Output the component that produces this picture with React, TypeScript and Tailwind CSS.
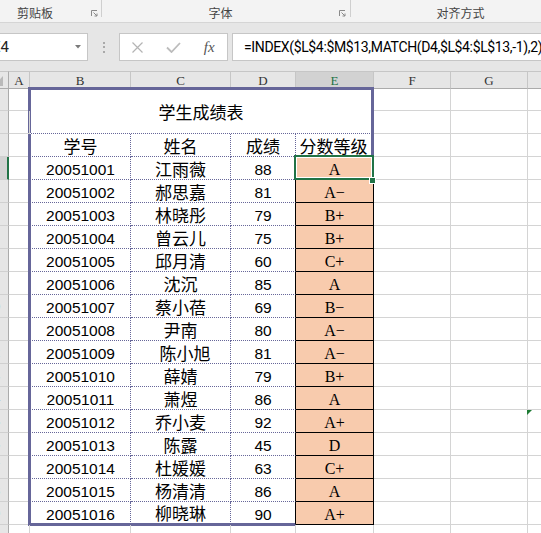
import React from 'react';

type Row = [string, string, number, string, string?];

const data: Row[] = [
  ['20051001', '江雨薇', 88, 'A'],
  ['20051002', '郝思嘉', 81, 'A−'],
  ['20051003', '林晓彤', 79, 'B+'],
  ['20051004', '曾云儿', 75, 'B+'],
  ['20051005', '邱月清', 60, 'C+'],
  ['20051006', '沈沉', 85, 'A'],
  ['20051007', '蔡小蓓', 69, 'B−'],
  ['20051008', '尹南', 80, 'A−'],
  ['20051009', '陈小旭', 81, 'A−', 'pl-[9px]'],
  ['20051010', '薛婧', 79, 'B+'],
  ['20051011', '萧煜', 86, 'A'],
  ['20051012', '乔小麦', 92, 'A+'],
  ['20051013', '陈露', 45, 'D'],
  ['20051014', '杜媛媛', 63, 'C+'],
  ['20051015', '杨清清', 86, 'A'],
  ['20051016', '柳晓琳', 90, 'A+'],
];

const GL = 'border-r border-b border-[#d4d4d4]';
const DOT = 'border-r border-b border-dotted border-[#666699]';
const CJK = "[font-family:'Noto_Sans_CJK_SC',sans-serif] text-[17px] leading-none text-black";
const NUM = "[font-family:'Liberation_Sans',sans-serif] text-[15.5px] leading-none text-black pt-[4px]";
const SERIF = "[font-family:'Liberation_Serif',serif] leading-none";

function RowHdr({ n, sel }: { n: number; sel?: boolean }) {
  return (
    <div
      className={`overflow-hidden flex items-center border-b border-b-[#d0d0d0] ${
        sel ? 'bg-[#d2d2d2] border-r-2 border-r-[#217346]' : 'bg-[#e6e6e6] border-r border-r-[#ababab]'
      }`}
    >
      <div className="shrink-0 w-[26px] -ml-[20px] text-center text-[13px] text-[#444] [font-family:'Liberation_Sans',sans-serif] leading-none">
        {n}
      </div>
    </div>
  );
}

function Launcher() {
  return (
    <svg width="7" height="7" viewBox="0 0 7 7" className="block">
      <path d="M0.5 6V0.5H6" fill="none" stroke="#8a8a8a" strokeWidth="1" />
      <path d="M2.5 2.5L6 6M6 3.5V6H3.5" fill="none" stroke="#8a8a8a" strokeWidth="1" />
    </svg>
  );
}

export default function App() {
  const cols = ['A', 'B', 'C', 'D', 'E', 'F', 'G', 'H'];
  return (
    <div className="w-[541px] h-[533px] overflow-hidden bg-white relative [font-family:'Liberation_Sans','Noto_Sans_CJK_SC',sans-serif]">
      {/* Ribbon group labels */}
      <div className="h-[23px] bg-[#f3f3f3] border-b border-[#d5d5d5] flex text-[12px] text-[#444] [font-family:'Noto_Sans_CJK_SC',sans-serif] overflow-hidden">
        <div className="w-[70px] shrink-0 h-[22px] flex items-center justify-center pt-[3px]">剪贴板</div>
        <div className="ml-[21px] mt-[10px] shrink-0">
          <Launcher />
        </div>
        <div className="ml-[3px] w-px h-[17px] bg-[#cfcfcf] shrink-0" />
        <div className="w-[237px] shrink-0 h-[22px] flex items-center justify-center pt-[3px]">字体</div>
        <div className="mt-[10px] shrink-0">
          <Launcher />
        </div>
        <div className="ml-[4px] w-px h-[17px] bg-[#cfcfcf] shrink-0" />
        <div className="w-[219px] shrink-0 h-[22px] flex items-center justify-center pt-[3px]">对齐方式</div>
      </div>

      {/* Formula bar band */}
      <div className="h-[48px] bg-[#e6e6e6] pt-[10px] overflow-hidden">
        <div className="flex items-center h-[28px]">
          <div className="-ml-[12px] w-[100px] h-[28px] shrink-0 bg-white border border-[#c6c6c6] flex items-center pl-[3px] text-[15px] text-[#222] [font-family:'Roboto',sans-serif]">
            <span>E4</span>
            <svg width="6" height="4" viewBox="0 0 6 4" className="ml-auto mr-[6px]">
              <path d="M0 0H6L3 3.5Z" fill="#7a7a7a" />
            </svg>
          </div>
          <div className="ml-[15px] w-[3px] flex flex-col gap-[2.5px] shrink-0">
            <div className="w-[2px] h-[2px] bg-[#a9a9a9]" />
            <div className="w-[2px] h-[2px] bg-[#a9a9a9]" />
            <div className="w-[2px] h-[2px] bg-[#a9a9a9]" />
          </div>
          <div className="ml-[13px] w-[109px] h-[28px] shrink-0 bg-white border border-[#c6c6c6] flex items-center">
            <div className="w-[36px] flex justify-center">
              <svg width="11" height="11" viewBox="0 0 11 11">
                <path d="M0.5 0.5L10.5 10.5M10.5 0.5L0.5 10.5" stroke="#b4b4b4" strokeWidth="1.2" />
              </svg>
            </div>
            <div className="w-[36px] flex justify-center">
              <svg width="15" height="11" viewBox="0 0 15 11">
                <path d="M1 5.5L5.5 10L14 1" fill="none" stroke="#bcbcbc" strokeWidth="1.8" />
              </svg>
            </div>
            <div className="w-[36px] flex justify-center text-[15px] italic text-[#555] [font-family:'Liberation_Serif',serif] leading-none">
              fx
            </div>
          </div>
          <div className="ml-[4px] w-[400px] h-[28px] shrink-0 bg-white border border-[#c6c6c6] flex items-center pl-[11px] text-[14px] tracking-[-0.36px] text-black [font-family:'Roboto',sans-serif] whitespace-nowrap">
            =INDEX($L$4:$M$13,MATCH(D4,$L$4:$L$13,-1),2)
          </div>
        </div>
      </div>

      {/* Sheet grid */}
      <div className="grid w-[605px] grid-cols-[9px_21px_101px_100px_65px_78px_77px_77px_77px] grid-rows-[18px_22px_repeat(19,23px)]">
        {/* column headers */}
        <div className="bg-[#e6e6e6] border-t border-b border-r border-t-[#c6c6c6] border-b-[#ababab] border-r-[#ababab] relative overflow-hidden">
          <svg width="9" height="17" viewBox="0 0 9 17" className="absolute left-0 top-0">
            <path d="M-6 14H3V4Z" fill="#b9b9b9" />
          </svg>
        </div>
        {cols.map((c) => (
          <div
            key={c}
            className={`flex items-center justify-center pt-[1px] text-[13px] ${SERIF} border-t border-r border-t-[#c6c6c6] border-r-[#c6c6c6] ${
              c === 'E'
                ? 'bg-[#d2d2d2] text-[#217346] border-b-2 border-b-[#217346]'
                : 'bg-[#e6e6e6] text-[#333] border-b border-b-[#ababab]'
            }`}
          >
            {c}
          </div>
        ))}

        {/* row 1 */}
        <RowHdr n={1} />
        <div className={GL} />
        <div
          className={`col-start-3 col-span-4 row-start-2 row-span-2 -ml-[2px] -mt-[2px] border-l-[3px] border-t-[3px] border-r-[3px] border-b border-[#666699] [border-bottom-style:dotted] flex items-center justify-center ${CJK}`}
        >
          学生成绩表
        </div>
        <div className={GL} />
        <div className={GL} />
        <div className={GL} />

        {/* row 2 */}
        <RowHdr n={2} />
        <div className={GL} />
        <div className={GL} />
        <div className={GL} />
        <div className={GL} />

        {/* row 3 header */}
        <RowHdr n={3} />
        <div className={GL} />
        <div className={`${DOT} -ml-[2px] border-l-[3px] [border-left-style:solid] flex items-center justify-center ${CJK}`}>学号</div>
        <div className={`${DOT} flex items-center justify-center ${CJK}`}>姓名</div>
        <div className={`${DOT} flex items-center justify-center ${CJK}`}>成绩</div>
        <div className={`border-r-[3px] border-b border-[#666699] [border-bottom-style:dotted] flex items-center justify-center ${CJK}`}>
          分数等级
        </div>
        <div className={GL} />
        <div className={GL} />
        <div className={GL} />

        {data.map(([id, name, score, grade, extra], i) => {
          const r = i + 4;
          const last = i === data.length - 1;
          const lastB = last ? '-mb-[1px] border-b-[3px] [border-bottom-style:solid]' : '';
          return (
            <React.Fragment key={id}>
              <RowHdr n={r} sel={r === 4} />
              <div className={GL} />
              <div
                className={`${DOT} -ml-[2px] border-l-[3px] [border-left-style:solid] ${lastB} flex items-center justify-center ${NUM}`}
              >
                {id}
              </div>
              <div className={`${DOT} ${lastB} flex items-center justify-center ${CJK} ${extra ?? ''}`}>{name}</div>
              <div
                className={`border-b border-r border-dotted border-[#666699] border-r-black [border-right-style:solid] ${lastB} flex items-center justify-center ${NUM}`}
              >
                {score}
              </div>
              <div
                className={`bg-[#f8cbad] border-r border-b border-black flex items-center justify-center pt-[4px] text-[16px] text-black ${SERIF} ${
                  r === 4 ? 'relative z-10' : ''
                }`}
              >
                {grade}
                {r === 4 && (
                  <>
                    <div className="absolute -left-[2px] -top-[2px] -right-[1px] -bottom-[1px] border-2 border-[#217346] shadow-[inset_0_0_0_1px_#ffffff]" />
                    <div className="absolute left-[73px] top-[20px] w-[7px] h-[7px] bg-[#217346] border border-white" />
                  </>
                )}
              </div>
              <div className={GL} />
              <div className={GL} />
              <div className={`${GL} ${r === 15 ? 'relative' : ''}`}>
                {r === 15 && (
                  <svg width="5" height="5" viewBox="0 0 5 5" className="absolute -left-[1px] top-0">
                    <path d="M0 0H5L0 5Z" fill="#1e7b34" />
                  </svg>
                )}
              </div>
            </React.Fragment>
          );
        })}

        {/* row 20 */}
        <RowHdr n={20} />
        <div className={GL} />
        <div className={GL} />
        <div className={GL} />
        <div className={GL} />
        <div className={GL} />
        <div className={GL} />
        <div className={GL} />
        <div className={GL} />
      </div>
    </div>
  );
}
